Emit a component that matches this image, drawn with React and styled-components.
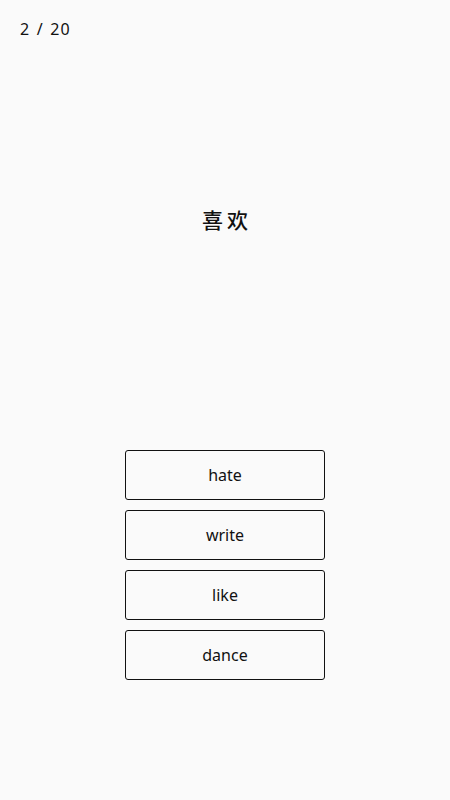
import styled, { createGlobalStyle } from 'styled-components';

const GlobalStyle = createGlobalStyle`
  html, body {
    margin: 0;
    padding: 0;
    background: #fafafa;
  }
  body {
    font-family: "Noto Sans", "Noto Sans CJK SC", sans-serif;
    color: #111;
  }
`;

const Screen = styled.div`
  width: 450px;
  height: 800px;
  display: flex;
  flex-direction: column;
  background: #fafafa;
`;

const Counter = styled.div`
  padding: 18px 20px;
  height: 22px;
  font-size: 16px;
  line-height: 22px;
  letter-spacing: 1.2px;
  word-spacing: 1px;
`;

const Prompt = styled.div`
  margin-top: 148px;
  height: 26px;
  text-align: center;
  font-family: "Noto Sans CJK SC", sans-serif;
  font-size: 21px;
  line-height: 26px;
  font-weight: 500;
  letter-spacing: 4px;
  padding-left: 4px;
`;

const Choices = styled.div`
  margin-top: 218px;
  display: flex;
  flex-direction: column;
  align-items: center;
  gap: 10px;
`;

const Choice = styled.button`
  width: 200px;
  height: 50px;
  box-sizing: border-box;
  border: 1.3px solid #111;
  border-radius: 3px;
  background: #fafafa;
  font-family: "Noto Sans", sans-serif;
  font-size: 16px;
  color: #111;
  cursor: pointer;
  padding: 0;
`;

const options = ['hate', 'write', 'like', 'dance'];

export default function App() {
  return <Screen>
    <GlobalStyle />
    <Counter>2 / 20</Counter>
    <Prompt>喜欢</Prompt>
    <Choices>
      {options.map(o => <Choice key={o}>{o}</Choice>)}
    </Choices>
  </Screen>
}
